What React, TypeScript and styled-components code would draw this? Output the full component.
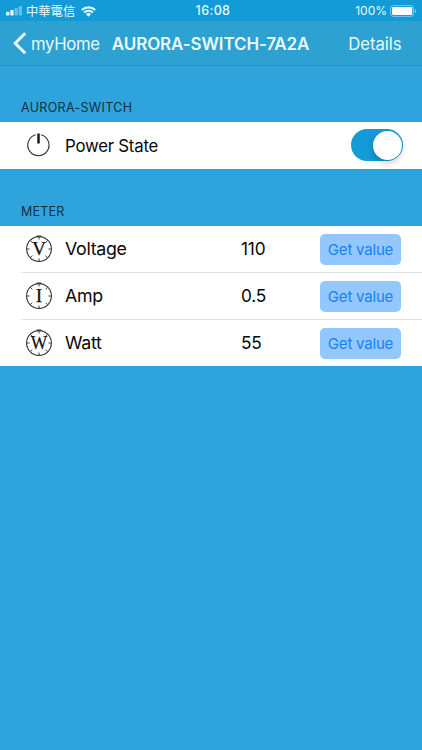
import React from "react";
import styled, { createGlobalStyle } from "styled-components";

const GlobalStyle = createGlobalStyle`
  * { box-sizing: border-box; }
  html, body { margin: 0; padding: 0; background: #2fa4dc; }
  body { font-family: Inter, "Noto Sans CJK TC", sans-serif; overflow: hidden; }
`;

const Screen = styled.div`
  width: 422px;
  height: 750px;
  background: #2fa4dc;
  display: flex;
  flex-direction: column;
`;

const StatusBar = styled.header`
  height: 21px;
  background: #129bd6;
  color: #e4fbff;
  display: grid;
  grid-template-columns: 1fr auto 1fr;
  align-items: center;
  padding: 1px 5px 0 6px;
  font-size: 12px;
  line-height: 20px;
`;

const StatusGroup = styled.div<{ $end?: boolean }>`
  display: flex;
  align-items: center;
  justify-content: ${(p) => (p.$end ? "flex-end" : "flex-start")};
`;

const Carrier = styled.span`
  font-family: "Noto Sans CJK TC", sans-serif;
  font-size: 12.3px;
  margin: 0 6px 0 4px;
`;

const Clock = styled.span`
  font-size: 12.5px;
  font-weight: 500;
  letter-spacing: 0.4px;
  padding-left: 3px;
`;

const BatteryLabel = styled.span`
  font-size: 12px;
  letter-spacing: 0;
  margin-right: 3px;
`;

const NavBar = styled.nav`
  height: 45px;
  background: #2da1d2;
  border-bottom: 1px solid #2895c8;
  color: #e6fbff;
  display: flex;
  align-items: center;
  padding: 0 20.5px 0 13px;
`;

const NavButton = styled.button`
  display: flex;
  align-items: center;
  gap: 4px;
  border: 0;
  padding: 0;
  background: none;
  color: inherit;
  font: 400 16.7px/24px Inter, sans-serif;
`;

const NavText = styled.span<{ $tight?: boolean }>`
  padding-top: 1px;
  letter-spacing: ${(p) => (p.$tight ? "-0.3px" : "-0.05px")};
`;

const Title = styled.h1`
  flex: 1;
  margin: 0 0 0 12px;
  padding-top: 1px;
  font-size: 17px;
  line-height: 24px;
  font-weight: 600;
  letter-spacing: -0.1px;
  white-space: nowrap;
`;

const Section = styled.section`
  display: flex;
  flex-direction: column;
`;

const SectionTitle = styled.h2<{ $first?: boolean }>`
  margin: 0;
  height: ${(p) => (p.$first ? 56 : 57)}px;
  padding: 0 0 6px 21px;
  display: flex;
  align-items: flex-end;
  color: #12303f;
  font-size: 12.5px;
  line-height: 16px;
  font-weight: 400;
  letter-spacing: ${(p) => (p.$first ? "0.32px" : "0.2px")};
`;

const Row = styled.div`
  height: 47px;
  padding-left: 21px;
  background: #fff;
  display: flex;

  &:last-child { height: 46.5px; }
`;

const RowBody = styled.div<{ $divided?: boolean }>`
  flex: 1;
  display: grid;
  grid-template-columns: 44px 176px 79px 1fr;
  align-items: center;
  border-bottom: ${(p) => (p.$divided ? "1px solid #e2e3e8" : "0")};
`;

const IconCell = styled.span`
  display: flex;
  padding-left: 4px;
`;

const Label = styled.span<{ $compact?: boolean }>`
  padding-top: 1px;
  color: #080808;
  font-size: ${(p) => (p.$compact ? 16.8 : 17.8)}px;
  line-height: 24px;
  letter-spacing: ${(p) => (p.$compact ? "-0.22px" : "-0.3px")};
`;

const Value = styled(Label)`
  font-size: 17.3px;
  letter-spacing: -0.2px;
`;

const GetButton = styled.button`
  width: 81px;
  height: 31px;
  margin-top: 1px;
  border: 0;
  border-radius: 5px;
  padding: 0;
  background: #93c8ff;
  color: #1482fa;
  font: 400 15px/31px Inter, sans-serif;
  letter-spacing: -0.2px;
  white-space: nowrap;
`;

const Toggle = styled.button`
  grid-column: 4;
  margin-left: 31px;
  width: 52px;
  height: 32px;
  border: 0;
  border-radius: 16px;
  padding: 1.5px;
  background: #129bd4;
  display: flex;
  justify-content: flex-end;
`;

const Knob = styled.span`
  width: 29px;
  height: 29px;
  border-radius: 50%;
  background: #fff;
  box-shadow: 0 3px 6px rgba(0, 0, 0, 0.2);
`;

const SignalIcon = () => (
  <svg width="16" height="10" viewBox="0 0 16 10" fill="currentColor">
    <rect x="0" y="5.8" width="3.3" height="3.7" rx=".8" />
    <rect x="4.3" y="4" width="3.3" height="5.5" rx=".8" />
    <rect x="8.6" y="2" width="3.3" height="7.5" rx=".8" opacity=".4" />
    <rect x="12.7" y="0" width="3.3" height="9.5" rx=".8" opacity=".4" />
  </svg>
);

const WifiIcon = () => (
  <svg width="15" height="11" viewBox="0 0 15 11" fill="none" stroke="currentColor" strokeWidth="2.1">
    <path d="M.8 4.1a9.5 9.5 0 0 1 13.4 0M3.1 6.6a6.2 6.2 0 0 1 8.8 0" />
    <path d="M7.5 10.8 5 8.3a3.6 3.6 0 0 1 5 0Z" fill="currentColor" stroke="none" />
  </svg>
);

const BatteryIcon = () => (
  <svg width="27" height="12" viewBox="0 0 27 12">
    <rect x=".6" y=".6" width="23" height="10.8" rx="2.8" fill="none" stroke="#82cfee" strokeWidth=".9" />
    <rect x="2" y="2" width="20.2" height="8" rx="1.4" fill="#fff" />
    <path d="M24.8 4v4c1.7-.6 1.7-3.4 0-4Z" fill="#82cfee" />
  </svg>
);

const BackIcon = () => (
  <svg width="14" height="23" viewBox="0 0 14 23" fill="none" stroke="currentColor" strokeWidth="3">
    <path d="M12.2 1.3 2.2 11.3l10 10" />
  </svg>
);

const PowerIcon = () => (
  <svg width="26" height="26" viewBox="0 0 26 26" fill="none" stroke="#303030" strokeWidth="1.1">
    <path d="M10.8 2.8a10.6 10.6 0 1 0 5.2 0" />
    <path d="M13.5 1.5v10" stroke="#111" strokeWidth="2.4" />
  </svg>
);

const DialIcon = ({ letter }: { letter: string }) => (
  <svg width="28" height="28" viewBox="0 0 28 28">
    <g fill="none" stroke="#333" strokeWidth="1.1">
      <circle cx="14" cy="14" r="12.4" />
      {[0, 45, 90, 135, 180, 225, 270, 315].map((angle) => (
        <path key={angle} d="M14 1.8v2.8" strokeWidth=".9" transform={`rotate(${angle} 14 14)`} />
      ))}
      <path d="M11.8 1.2h4.4" strokeWidth="1.4" />
    </g>
    <text
      x="14"
      y="20.3"
      textAnchor="middle"
      fontFamily="Liberation Serif, serif"
      fontSize="19.5"
      textLength={letter === "W" ? 16.5 : undefined}
      lengthAdjust="spacingAndGlyphs"
      fill="#111"
      stroke="#111"
      strokeWidth=".25"
    >
      {letter}
    </text>
  </svg>
);

const meters = [
  { name: "Voltage", letter: "V", value: "110" },
  { name: "Amp", letter: "I", value: "0.5" },
  { name: "Watt", letter: "W", value: "55" },
];

export default function App() {
  return (
    <Screen>
      <GlobalStyle />
      <StatusBar>
        <StatusGroup>
          <SignalIcon />
          <Carrier>中華電信</Carrier>
          <WifiIcon />
        </StatusGroup>
        <Clock>16:08</Clock>
        <StatusGroup $end>
          <BatteryLabel>100%</BatteryLabel>
          <BatteryIcon />
        </StatusGroup>
      </StatusBar>
      <NavBar>
        <NavButton>
          <BackIcon />
          <NavText $tight>myHome</NavText>
        </NavButton>
        <Title>AURORA-SWITCH-7A2A</Title>
        <NavButton>
          <NavText>Details</NavText>
        </NavButton>
      </NavBar>
      <Section>
        <SectionTitle $first>AURORA-SWITCH</SectionTitle>
        <Row>
          <RowBody>
            <IconCell>
              <PowerIcon />
            </IconCell>
            <Label $compact>Power State</Label>
            <Toggle role="switch" aria-checked="true" aria-label="Power State">
              <Knob />
            </Toggle>
          </RowBody>
        </Row>
      </Section>
      <Section>
        <SectionTitle>METER</SectionTitle>
        {meters.map((meter, index) => (
          <Row key={meter.name}>
            <RowBody $divided={index < meters.length - 1}>
              <IconCell>
                <DialIcon letter={meter.letter} />
              </IconCell>
              <Label>{meter.name}</Label>
              <Value>{meter.value}</Value>
              <GetButton>Get value</GetButton>
            </RowBody>
          </Row>
        ))}
      </Section>
    </Screen>
  );
}
